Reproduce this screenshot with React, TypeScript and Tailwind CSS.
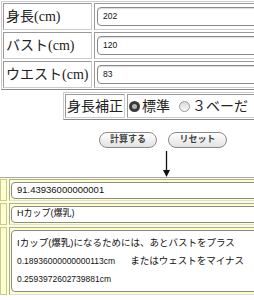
import React from "react";

const serif = { fontFamily: '"Liberation Serif", "Noto Sans CJK JP", serif' };
const sans = { fontFamily: '"Liberation Sans", "Noto Sans CJK JP", sans-serif' };

function Row({ label, value }: { label: string; value: string }) {
  return (
    <div className="flex gap-[2px] h-[27px]">
      <div
        className="w-[89px] shrink-0 border border-[#999] border-r-[#ccc] border-b-[#ccc] flex items-center pl-[2px] text-[14px] text-[#222] whitespace-nowrap"
        style={serif}
      >
        {label}
      </div>
      <div className="flex-1 border border-[#999] border-r-[#ccc] border-b-[#ccc] flex items-center pl-[2px]">
        <div
          className="h-[19px] w-full rounded-[4px] border border-[#8a8a8a] bg-white flex items-center pl-[5px] text-[8.5px] text-[#111] shadow-[inset_0_1px_1px_rgba(0,0,0,0.15)]"
          style={sans}
        >
          {value}
        </div>
      </div>
    </div>
  );
}

export default function App() {
  return (
    <div className="w-[254px] h-[300px] overflow-hidden bg-white relative">
      <div className="w-[254px] overflow-hidden">
        <div className="ml-[1px] mt-[1px] w-[300px] border border-[#ccc] border-r-[#888] border-b-[#888] p-[1px] flex flex-col gap-[2px]">
          <Row label="身長(cm)" value="202" />
          <Row label="バスト(cm)" value="120" />
          <Row label="ウエスト(cm)" value="83" />
        </div>

        <div className="ml-[63px] mt-[2px] w-[230px] border border-[#ccc] border-r-[#888] border-b-[#888] p-[1px] flex gap-[2px]">
          <div
            className="w-[60px] h-[24px] shrink-0 border border-[#999] border-r-[#ccc] border-b-[#ccc] flex items-center pl-[1px] text-[14px] text-[#222] whitespace-nowrap"
            style={serif}
          >
            身長補正
          </div>
          <div
            className="flex-1 border border-[#999] border-r-[#ccc] border-b-[#ccc] flex items-center pl-[1px] text-[14px] text-[#222] whitespace-nowrap"
            style={serif}
          >
            <span className="w-[11px] h-[11px] shrink-0 rounded-full bg-[#3a3a3a] flex items-center justify-center mr-[2px]">
              <span className="w-[5px] h-[5px] rounded-full bg-[#b5b5b5]" />
            </span>
            <span>標準</span>
            <span className="w-[11px] h-[11px] shrink-0 rounded-full border border-[#999] bg-gradient-to-b from-[#d8d8d8] to-[#fafafa] ml-[9px] mr-[2px]" />
            <span>３ベーだ</span>
          </div>
        </div>

        <div className="flex gap-[11px] mt-[12px] ml-[99px]" style={sans}>
          <div className="w-[58px] h-[16px] rounded-full border border-[#888] bg-gradient-to-b from-white to-[#e2e2e2] flex items-center justify-center text-[9px] font-bold text-[#444]">
            計算する
          </div>
          <div className="w-[59px] h-[16px] rounded-full border border-[#888] bg-gradient-to-b from-white to-[#e2e2e2] flex items-center justify-center text-[9px] font-bold text-[#444]">
            リセット
          </div>
        </div>

        <div className="h-[29px] flex items-start pl-[162px] pt-[3px]">
          <svg width="9" height="26" viewBox="0 0 9 26">
            <line x1="4.5" y1="0" x2="4.5" y2="21" stroke="#111" strokeWidth="1.3" />
            <polygon points="1,19 8,19 4.5,26" fill="#111" />
          </svg>
        </div>

        <div className="w-[300px] border-t border-[#aaa] bg-[#ffffcc] flex flex-col gap-[2px] pt-[1px]" style={sans}>
          <div className="flex gap-[2px] h-[22px]">
            <div className="w-[7px] shrink-0 border border-[#c8c8a0]" />
            <div className="flex-1 border border-[#aaa] border-r-[#ddd] border-b-[#ddd] flex items-center pl-[1px]">
              <div className="h-[17px] w-full rounded-[4px] border border-[#8a8a8a] bg-white flex items-center pl-[5px] text-[9.5px] text-[#111]">
                91.43936000000001
              </div>
            </div>
          </div>
          <div className="flex gap-[2px] h-[22px]">
            <div className="w-[7px] shrink-0 border border-[#c8c8a0]" />
            <div className="flex-1 border border-[#aaa] border-r-[#ddd] border-b-[#ddd] flex items-center pl-[1px]">
              <div className="h-[17px] w-full rounded-[4px] border border-[#8a8a8a] bg-white flex items-center pl-[5px] text-[9px] text-[#111]">
                Hカップ(爆乳)
              </div>
            </div>
          </div>
          <div className="flex gap-[2px] h-[68px]">
            <div className="w-[7px] shrink-0 border border-[#c8c8a0]" />
            <div className="flex-1 border border-[#aaa] border-r-[#ddd] border-b-[#ddd] flex items-center pl-[1px]">
              <div className="h-[62px] w-full rounded-[4px] border border-[#8a8a8a] bg-white flex flex-col justify-center pl-[5px] text-[9.5px] leading-[18px] text-[#111] whitespace-nowrap">
                <div>Iカップ(爆乳)になるためには、あとバストをプラス</div>
                <div>
                  <span className="text-[8.5px]">0.18936000000000113cm</span>
                  <span className="ml-[15px]">またはウェストをマイナス</span>
                </div>
                <div className="text-[8.5px]">0.2593972602739881cm</div>
              </div>
            </div>
          </div>
        </div>
      </div>
    </div>
  );
}
